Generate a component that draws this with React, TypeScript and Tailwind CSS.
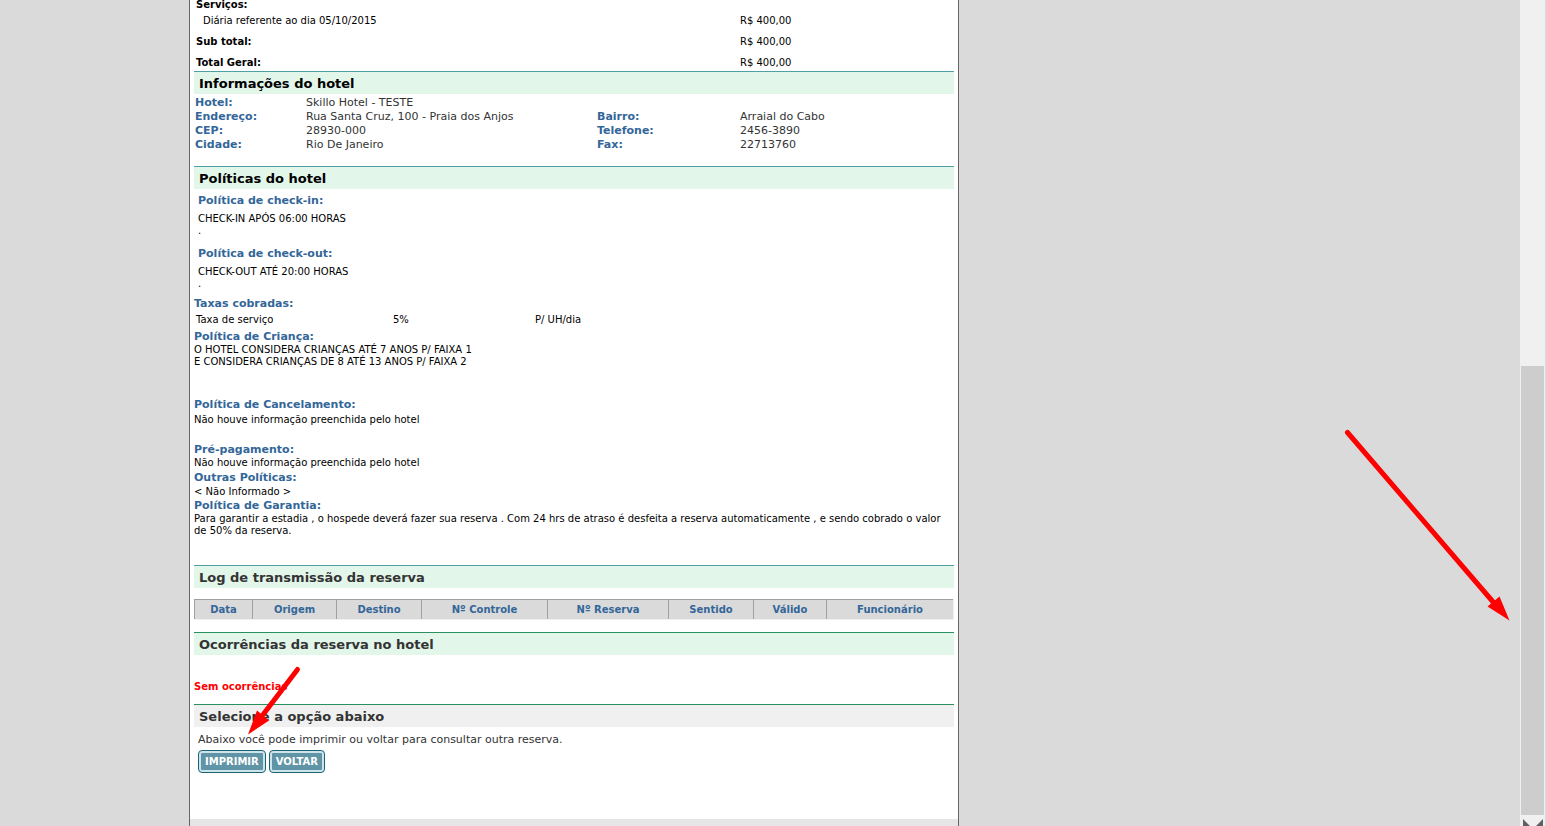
import React from 'react';
import clsx from 'clsx';

interface PolicyProps {
  title: string;
  lines: string[];
  className?: string;
  textClassName?: string;
}

const services = [
  { label: 'Diária referente ao dia 05/10/2015', value: 'R$ 400,00', total: false },
  { label: 'Sub total:', value: 'R$ 400,00', total: true },
  { label: 'Total Geral:', value: 'R$ 400,00', total: true }
];

const hotelInfo = [
  ['Hotel:', 'Skillo Hotel - TESTE', '', ''],
  ['Endereço:', 'Rua Santa Cruz, 100 - Praia dos Anjos', 'Bairro:', 'Arraial do Cabo'],
  ['CEP:', '28930-000', 'Telefone:', '2456-3890'],
  ['Cidade:', 'Rio De Janeiro', 'Fax:', '22713760']
];

const logColumns = [
  { label: 'Data', width: 'w-[58px]' },
  { label: 'Origem', width: 'w-[84px]' },
  { label: 'Destino', width: 'w-[85px]' },
  { label: 'Nº Controle', width: 'w-[126px]' },
  { label: 'Nº Reserva', width: 'w-[121px]' },
  { label: 'Sentido', width: 'w-[85px]' },
  { label: 'Válido', width: 'w-[73px]' },
  { label: 'Funcionário', width: '' }
];

function SectionTitle({ children, className }: { children: React.ReactNode; className?: string }) {
  return (
    <h2 className={clsx('h-[23px] border-t pl-[5px] text-[13px] leading-[24px] font-bold', className)}>
      {children}
    </h2>
  );
}

function Policy({ title, lines, className, textClassName }: PolicyProps) {
  return (
    <div className={className}>
      <h3 className="text-[11px] leading-[14px] font-bold text-[#336699]">{title}</h3>
      <p className={clsx('text-[10px] leading-[12px] text-black', textClassName)}>
        {lines.map((line, i) => (
          <span key={i} className="block">{line}</span>
        ))}
      </p>
    </div>
  );
}

function ActionButton({ children }: { children: React.ReactNode }) {
  return (
    <button
      type="button"
      className="h-[23px] rounded-[4px] border border-[#1b6474] bg-[#cfe3ea] p-[2px] text-[10px] leading-[17px] font-bold text-white"
    >
      <span className="block rounded-[1px] bg-[#5f95a6] px-1">{children}</span>
    </button>
  );
}

function Scrollbar() {
  return (
    <div className="flex h-full w-[26px] shrink-0 flex-col border-r border-[#dadada] bg-[#f0f0f0]">
      <div className="h-[366px] shrink-0" />
      <div className="mx-px flex-1 bg-[#cdcdcd]" />
      <div className="flex h-[11px] shrink-0 justify-center overflow-hidden">
        <svg className="mt-[4px] shrink-0" width="20" height="18" viewBox="0 0 20 18">
          <path d="M0 0 L10 10 L20 0 V8 L10 18 L0 8 Z" fill="#606060" />
        </svg>
      </div>
    </div>
  );
}

export default function App() {
  return (
    <div className="flex h-screen overflow-hidden bg-[#dadada] font-['Verdana','DejaVu_Sans',sans-serif] text-[#333333]">
      <main className="relative flex min-w-0 flex-1 pl-[189px]">
        <div className="flex w-full max-w-[770px] flex-col border-x border-[#666666] bg-white">
          <div className="px-1">
            {/* Serviços */}
            <table className="w-full table-fixed text-[10px] text-black">
              <thead>
                <tr>
                  <th className="h-[10px] pl-[2px] text-left leading-[10px] font-bold" scope="col">Serviços:</th>
                  <td className="w-[214px]" />
                </tr>
              </thead>
              <tbody>
                {services.map(({ label, value, total }) => (
                  <tr key={label} className="leading-[21px] last:leading-[17px] last:*:pt-[2px]">
                    <td className={total ? 'pl-[2px] font-bold' : 'pl-[9px]'}>{label}</td>
                    <td>{value}</td>
                  </tr>
                ))}
              </tbody>
            </table>

            {/* Informações do hotel */}
            <SectionTitle className="border-[#4f9fa6] bg-[#e2f6ea] text-black">Informações do hotel</SectionTitle>
            <table className="mt-[2px] mb-[14px] w-full table-fixed text-[11px] leading-[14px]">
              <tbody>
                {hotelInfo.map(([label, value, label2, value2]) => (
                  <tr key={label}>
                    <th scope="row" className="w-[112px] pl-px text-left font-bold text-[#336699]">{label}</th>
                    <td>{value}</td>
                    <th scope="row" className="w-[143px] text-left font-bold text-[#336699]">{label2}</th>
                    <td className="w-[214px]">{value2}</td>
                  </tr>
                ))}
              </tbody>
            </table>

            {/* Políticas do hotel */}
            <SectionTitle className="border-[#4f9fa6] bg-[#e2f6ea] text-black">Políticas do hotel</SectionTitle>
            <Policy
              title="Política de check-in:"
              lines={['CHECK-IN APÓS 06:00 HORAS', '.']}
              className="mt-[5px] pl-1"
              textClassName="mt-[5px]"
            />
            <Policy
              title="Política de check-out:"
              lines={['CHECK-OUT ATÉ 20:00 HORAS', '.']}
              className="mt-[10px] pl-1"
              textClassName="mt-[5px]"
            />
            <h3 className="mt-[7px] text-[11px] leading-[14px] font-bold text-[#336699]">Taxas cobradas:</h3>
            <table className="mt-[2px] w-full table-fixed text-[10px] leading-[14px] text-black">
              <tbody>
                <tr>
                  <td className="w-[199px] pl-[2px]">Taxa de serviço</td>
                  <td className="w-[142px]">5%</td>
                  <td>P/ UH/dia</td>
                </tr>
              </tbody>
            </table>
            <Policy
              title="Política de Criança:"
              lines={['O HOTEL CONSIDERA CRIANÇAS ATÉ 7 ANOS P/ FAIXA 1', 'E CONSIDERA CRIANÇAS DE 8 ATÉ 13 ANOS P/ FAIXA 2']}
              className="mt-[3px]"
            />
            <Policy
              title="Política de Cancelamento:"
              lines={['Não houve informação preenchida pelo hotel']}
              className="mt-[30px]"
              textClassName="mt-[2px]"
            />
            <Policy
              title="Pré-pagamento:"
              lines={['Não houve informação preenchida pelo hotel']}
              className="mt-[17px]"
            />
            <Policy title="Outras Políticas:" lines={['< Não Informado >']} className="mt-[2px]" textClassName="mt-px" />
            <Policy
              title="Política de Garantia:"
              lines={[
                'Para garantir a estadia , o hospede deverá fazer sua reserva . Com 24 hrs de atraso é desfeita a reserva automaticamente , e sendo cobrado o valor de 50% da reserva.'
              ]}
              className="mt-px"
            />

            {/* Log de transmissão */}
            <SectionTitle className="mt-7 border-[#4f9fa6] bg-[#e2f6ea]">Log de transmissão da reserva</SectionTitle>
            <table className="mt-[11px] w-full table-fixed border-separate border-spacing-0 border-r border-b border-[#f0f0f0] text-[10px] leading-[19px]">
              <thead>
                <tr>
                  {logColumns.map(({ label, width }) => (
                    <th
                      key={label}
                      scope="col"
                      className={clsx('border-t border-l border-[#a0a0a0] bg-[#dadada] font-bold text-[#336699]', width)}
                    >
                      {label}
                    </th>
                  ))}
                </tr>
              </thead>
            </table>

            {/* Ocorrências */}
            <SectionTitle className="mt-3 border-[#2a9060] bg-[#e2f6ea]">Ocorrências da reserva no hotel</SectionTitle>
            <p className="mt-[26px] text-[10px] leading-[12px] font-bold text-[#ff0000]">Sem ocorrências</p>

            {/* Opções */}
            <SectionTitle className="mt-[11px] border-[#2a9060] bg-[#f0f0f0]">Selecione a opção abaixo</SectionTitle>
            <div className="mt-[6px] pl-1">
              <p className="text-[11px] leading-[14px]">Abaixo você pode imprimir ou voltar para consultar outra reserva.</p>
              <div className="mt-[3px] flex gap-[3px]">
                <ActionButton>IMPRIMIR</ActionButton>
                <ActionButton>VOLTAR</ActionButton>
              </div>
            </div>
          </div>
          <div className="mt-[46px] flex-1 bg-[#e5e5e5]" />
        </div>

        {/* Setas de destaque */}
        <svg className="pointer-events-none absolute top-[660px] left-[240px]" width="64" height="80" viewBox="240 660 64 80">
          <path d="M297.5 669.5 L262 716" stroke="#ff0000" strokeWidth="5" strokeLinecap="round" />
          <path d="M248 734.5 L257 710.5 L269 720.5 Z" fill="#ff0000" />
        </svg>
        <svg className="pointer-events-none absolute top-[425px] right-[8px]" width="172" height="200" viewBox="1340 425 172 200">
          <path d="M1347.5 432.5 L1494 603" stroke="#ff0000" strokeWidth="5" strokeLinecap="round" />
          <path d="M1509.5 620.5 L1487.5 606.5 L1499.5 596.5 Z" fill="#ff0000" />
        </svg>
      </main>
      <Scrollbar />
    </div>
  );
}
